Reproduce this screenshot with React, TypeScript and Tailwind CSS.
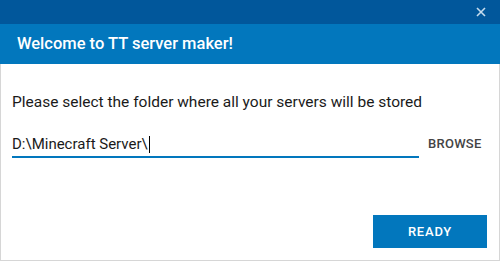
import React from 'react';

export default function App() {
  return (
    <div className="w-[500px] h-[261px] flex flex-col bg-white font-['Roboto','Liberation_Sans',sans-serif] overflow-hidden">
      {/* window chrome */}
      <div className="h-6 bg-[#01579b] flex items-center justify-end pr-[14px]">
        <svg width="10" height="10" viewBox="0 0 10 10" className="text-[#c6dcee]">
          <path d="M1 1L9 9M9 1L1 9" stroke="currentColor" strokeWidth="1.6" />
        </svg>
      </div>

      {/* header */}
      <div className="h-10 bg-[#0277bd] flex items-center pl-[17px]">
        <h1 className="text-white text-[16.5px] font-medium">Welcome to TT server maker!</h1>
      </div>

      {/* body */}
      <div className="flex-1 flex flex-col border-x border-b border-[#d6d6d6] px-[11px]">
        <p className="mt-[28px] text-[15.5px] text-[#1a1a1a] leading-[20px]">
          Please select the folder where all your servers will be stored
        </p>

        <div className="mt-[20px] flex items-end">
          <div className="w-[407px] border-b-2 border-[#0277bd] h-[26px] flex items-center text-[15px] text-[#1a1a1a]">
            <span>D:\Minecraft Server\</span>
            <span className="ml-px w-px h-[17px] bg-black" />
          </div>
          <button className="ml-[9px] mb-[5px] text-[13px] font-medium tracking-[0.02em] text-[#444]">
            BROWSE
          </button>
        </div>

        <div className="mt-auto mb-[12px] flex justify-end pr-[1px]">
          <button className="w-[114px] h-[33px] bg-[#0277bd] text-white text-[13px] font-medium tracking-[0.06em]">
            READY
          </button>
        </div>
      </div>
    </div>
  );
}
